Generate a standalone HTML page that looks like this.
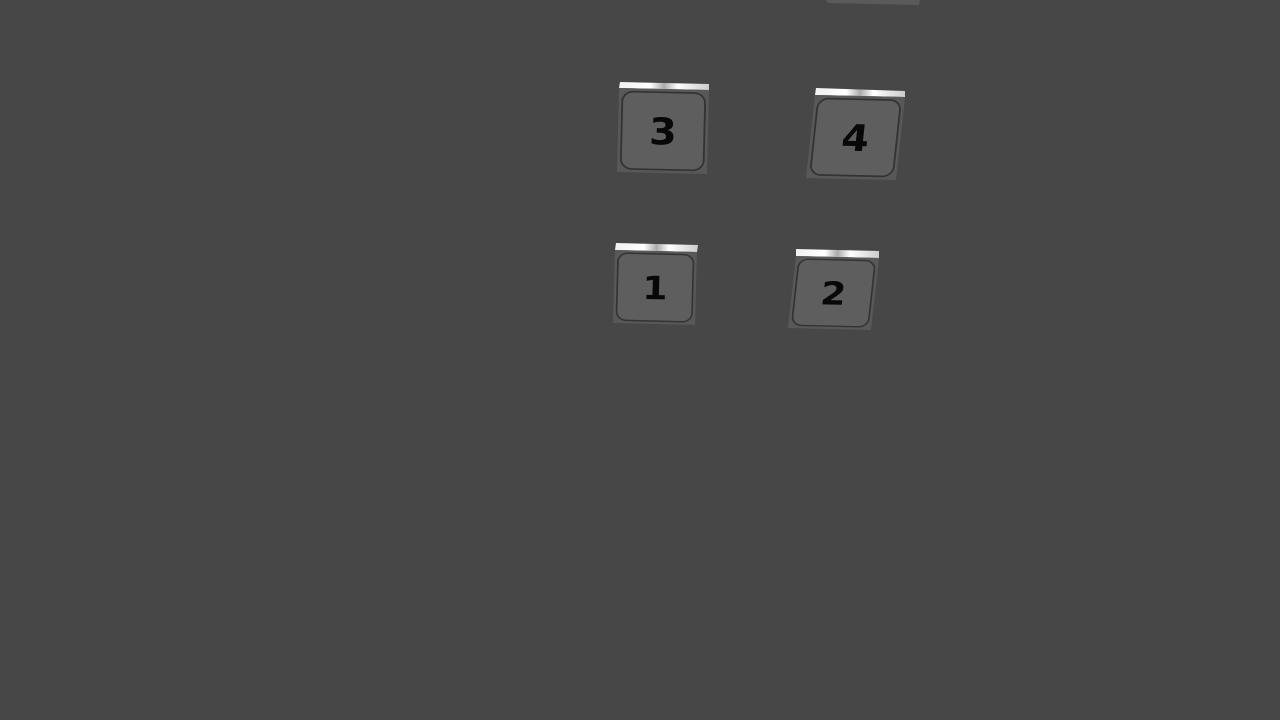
<!DOCTYPE html>
<html><head><style>html,body{margin:0;padding:0;background:#474747;overflow:hidden}svg{display:block}</style></head>
<body>
<svg width="1280" height="720" viewBox="0 0 1280 720" xmlns="http://www.w3.org/2000/svg">
<defs>
<linearGradient id="tg" x1="0" x2="1" y1="0" y2="0">
<stop offset="0" stop-color="#f0f0f0"/><stop offset="0.35" stop-color="#fff"/><stop offset="0.5" stop-color="#aaa"/><stop offset="0.65" stop-color="#fff"/><stop offset="1" stop-color="#ccc"/>
</linearGradient>
<g id="face">
<rect x="0" y="0" width="100" height="100" fill="#585858"/>
<rect x="4" y="4" width="92" height="92" rx="12" fill="#5e5e5e" stroke="#333" stroke-width="2"/>
</g>
</defs>
<polygon points="826,0 920,0 919,5 828,3" fill="#5a5a5a"/>
<polygon points="620,82 709,84 709,90 619,88" fill="url(#tg)"/>
<g transform="matrix(0.9,0.02,-0.02,0.84,619,88)"><use href="#face"/><text x="50" y="66" font-family="DejaVu Sans,sans-serif" font-weight="bold" font-size="44" text-anchor="middle" fill="#080808">3</text></g>
<polygon points="816,88 905,91 905,97 815,95" fill="url(#tg)"/>
<g transform="matrix(0.9,0.02,-0.09,0.83,815,95)"><use href="#face"/><text x="50" y="66" font-family="DejaVu Sans,sans-serif" font-weight="bold" font-size="44" text-anchor="middle" fill="#080808">4</text></g>
<polygon points="616,243 698,245 697,252 615,250" fill="url(#tg)"/>
<g transform="matrix(0.82,0.02,-0.02,0.73,615,250)"><use href="#face"/><text x="50" y="66" font-family="DejaVu Sans,sans-serif" font-weight="bold" font-size="44" text-anchor="middle" fill="#080808">1</text></g>
<polygon points="796,249 879,251 879,258 796,256" fill="url(#tg)"/>
<g transform="matrix(0.83,0.02,-0.08,0.72,796,256)"><use href="#face"/><text x="50" y="66" font-family="DejaVu Sans,sans-serif" font-weight="bold" font-size="44" text-anchor="middle" fill="#080808">2</text></g>
</svg>
</body></html>
